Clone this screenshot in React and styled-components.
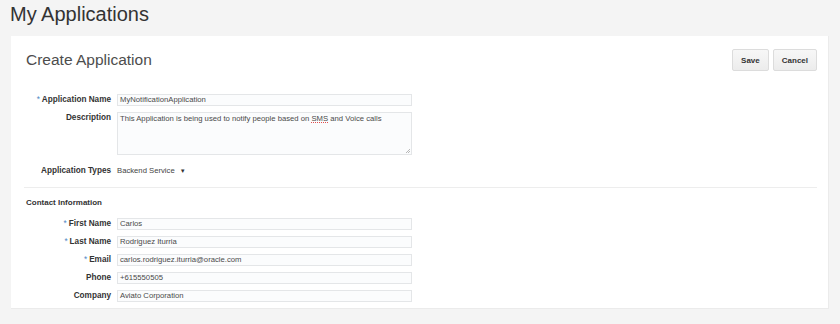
import { Fragment } from 'react';
import styled, { createGlobalStyle } from 'styled-components';

const GlobalStyle = createGlobalStyle`
    body {
        margin: 0;
        background: #f4f4f4;
        font-family: 'Liberation Sans', Arial, sans-serif;
        color: #333;
    }
`;

const Page = styled.div`
    width: 840px;
    height: 324px;
    box-sizing: border-box;
    padding: 2px 11px 0 11px;
    overflow: hidden;
`;

const PageTitle = styled.h1`
    margin: 0 0 10px -1px;
    font-size: 20px;
    line-height: 24px;
    font-weight: normal;
    color: #333;
`;

const Card = styled.div`
    background: #fff;
    border: 1px solid #ebebeb;
    border-left: none;
    border-top: none;
    padding: 13px 11px 6px 0;
`;

const CardHeader = styled.div`
    display: flex;
    justify-content: space-between;
    align-items: center;
    padding-left: 15px;
`;

const CardTitle = styled.h2`
    margin: 0;
    font-size: 15.5px;
    font-weight: normal;
    color: #4d4d4d;
`;

const Actions = styled.div`
    display: flex;
    gap: 4px;
`;

const Button = styled.button`
    height: 22px;
    padding: 0 ${(p) => p.$pad}px;
    font-family: inherit;
    font-size: 8px;
    font-weight: bold;
    color: #333;
    background: linear-gradient(#f7f7f7, #ececec);
    border: 1px solid #dcdcdc;
    border-radius: 2px;
`;

const Form = styled.div`
    display: grid;
    grid-template-columns: 100px 295px;
    column-gap: 6px;
    row-gap: 6px;
    align-items: start;
    margin-top: ${(p) => p.$top}px;
`;

const Label = styled.label`
    text-align: right;
    font-size: 8.2px;
    font-weight: bold;
    color: #333;
    line-height: 12px;
    margin-top: ${(p) => p.$top || 0}px;
`;

const Star = styled.span`
    color: #4f87c4;
    font-weight: normal;
    margin-right: 2px;
`;

const Input = styled.div`
    height: 12px;
    box-sizing: border-box;
    border: 1px solid #e4e6e8;
    background: #fbfcfd;
    font-size: 7.7px;
    line-height: 10px;
    padding: 0 2px;
    color: #4a4a4a;
    white-space: nowrap;
`;

const TextArea = styled(Input)`
    position: relative;
    height: 43px;
    padding-top: 1px;
`;

const Grip = styled.span`
    position: absolute;
    right: 1px;
    bottom: 1px;
    width: 4px;
    height: 4px;
    background: linear-gradient(135deg, transparent 45%, #b8b8b8 45%, #b8b8b8 55%, transparent 55%, transparent 75%, #b8b8b8 75%, #b8b8b8 85%, transparent 85%);
`;

const Misspelled = styled.span`
    text-decoration: underline dotted #e05050;
    text-decoration-thickness: 1px;
    text-underline-offset: 1px;
`;

const Value = styled.div`
    font-size: 7.7px;
    line-height: 12px;
    color: #444;
    margin-top: ${(p) => p.$top || 0}px;
    display: flex;
    align-items: center;
    gap: 5px;
`;

const Caret = styled.span`
    font-size: 6px;
    color: #333;
`;

const Divider = styled.hr`
    margin: 10px 0 0 13px;
    border: none;
    border-top: 1px solid #ededed;
`;

const SectionTitle = styled.h3`
    margin: 10px 0 0 15px;
    font-size: 8px;
    line-height: 10px;
    font-weight: bold;
    color: #333;
`;

const contacts = [
    { label: 'First Name', value: 'Carlos', required: true },
    { label: 'Last Name', value: 'Rodriguez Iturria', required: true },
    { label: 'Email', value: 'carlos.rodriguez.iturria@oracle.com', required: true },
    { label: 'Phone', value: '+615550505' },
    { label: 'Company', value: 'Aviato Corporation' },
];

export default function App() {
    return (
        <Page>
            <GlobalStyle />
            <PageTitle>My Applications</PageTitle>
            <Card>
                <CardHeader>
                    <CardTitle>Create Application</CardTitle>
                    <Actions>
                        <Button $pad={8}>Save</Button>
                        <Button $pad={8}>Cancel</Button>
                    </Actions>
                </CardHeader>
                <Form $top={23}>
                    <Label>
                        <Star>*</Star>Application Name
                    </Label>
                    <Input>MyNotificationApplication</Input>
                    <Label>Description</Label>
                    <TextArea>
                        This Application is being used to notify people based on{' '}
                        <Misspelled>SMS</Misspelled> and Voice calls
                        <Grip />
                    </TextArea>
                    <Label $top={4}>Application Types</Label>
                    <Value $top={4}>
                        Backend Service <Caret>▼</Caret>
                    </Value>
                </Form>
                <Divider />
                <SectionTitle>Contact Information</SectionTitle>
                <Form $top={10}>
                    {contacts.map((c) => (
                        <Fragment key={c.label}>
                            <Label>
                                {c.required && <Star>*</Star>}
                                {c.label}
                            </Label>
                            <Input>{c.value}</Input>
                        </Fragment>
                    ))}
                </Form>
            </Card>
        </Page>
    );
}
